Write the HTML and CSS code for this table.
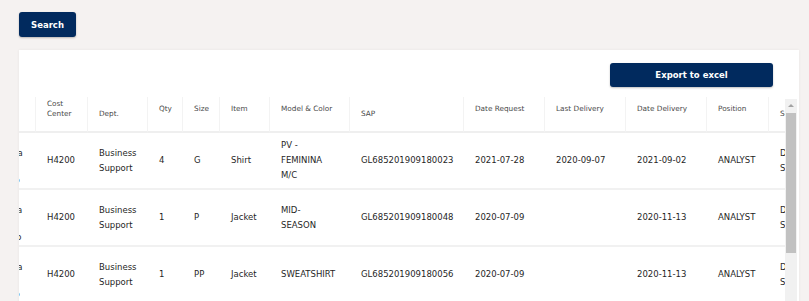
FILE: index.html
```html
<!DOCTYPE html>
<html lang="en">
  <head>
    <meta charset="UTF-8" />
    <meta name="viewport" content="width=device-width, initial-scale=1.0" />
    <title>Uniform requests</title>
    <link rel="stylesheet" href="styles.css">
  </head>
  <body>
    <div class="page">
      <button class="btn btn-search">Search</button>

      <div class="card">
        <div class="card-actions">
          <button class="btn btn-export">Export to excel</button>
        </div>

        <div class="grid-area">
          <div class="table-clip">
            <table class="requests">
              <thead>
                <tr>
                  <th class="c-name">Name</th>
                  <th class="c-cost">Cost Center</th>
                  <th class="c-dept th-mid">Dept.</th>
                  <th class="c-qty">Qty</th>
                  <th class="c-size">Size</th>
                  <th class="c-item">Item</th>
                  <th class="c-model">Model &amp; Color</th>
                  <th class="c-sap th-mid">SAP</th>
                  <th class="c-date">Date Request</th>
                  <th class="c-date">Last Delivery</th>
                  <th class="c-date">Date Delivery</th>
                  <th class="c-pos">Position</th>
                  <th class="c-sector th-mid">Sector</th>
                </tr>
              </thead>
              <tbody>
                <tr>
                  <td class="name">Ana<br>Oliveira<br>de<br>Ribeiro</td>
                  <td>H4200</td>
                  <td>Business Support</td>
                  <td>4</td>
                  <td>G</td>
                  <td>Shirt</td>
                  <td class="model">PV - FEMININA M/C</td>
                  <td>GL685201909180023</td>
                  <td>2021-07-28</td>
                  <td>2020-09-07</td>
                  <td>2021-09-02</td>
                  <td>ANALYST</td>
                  <td>Data<br>Science</td>
                </tr>
                <tr>
                  <td class="name">Ana<br>Moreira<br>de<br>Barreto</td>
                  <td>H4200</td>
                  <td>Business Support</td>
                  <td>1</td>
                  <td>P</td>
                  <td>Jacket</td>
                  <td class="model">MID- SEASON</td>
                  <td>GL685201909180048</td>
                  <td>2020-07-09</td>
                  <td></td>
                  <td>2020-11-13</td>
                  <td>ANALYST</td>
                  <td>Data<br>Science</td>
                </tr>
                <tr>
                  <td class="name">Lia<br>Teixeira<br>de<br>Ribeiro</td>
                  <td>H4200</td>
                  <td>Business Support</td>
                  <td>1</td>
                  <td>PP</td>
                  <td>Jacket</td>
                  <td class="model">SWEATSHIRT</td>
                  <td>GL685201909180056</td>
                  <td>2020-07-09</td>
                  <td></td>
                  <td>2020-11-13</td>
                  <td>ANALYST</td>
                  <td>Data<br>Science</td>
                </tr>
              </tbody>
            </table>
          </div>

          <div class="scrollbar">
            <div class="scroll-up"></div>
            <div class="scroll-thumb"></div>
          </div>
        </div>
      </div>
    </div>
  </body>
</html>
```

FILE: styles.css
```css
html,
body {
  margin: 0;
  height: 100%;
  overflow: hidden;
}

body {
  font-family: "DejaVu Sans", Arial, sans-serif;
  background-color: #f5f2f1;
  color: #1f1f1f;
}

.page {
  padding: 12px 10px 0 19px;
}

.btn {
  font-family: inherit;
  font-weight: bold;
  font-size: 8.5px;
  color: #fff;
  background-color: #012a5e;
  border: none;
  border-radius: 3px;
  box-shadow: 0 1px 2px rgba(0, 0, 0, 0.25);
  cursor: pointer;
  padding: 0;
}

.btn-search {
  width: 57px;
  height: 25px;
  display: block;
}

.card {
  margin-top: 13px;
  width: 780px;
  height: 260px;
  background-color: #fff;
  box-shadow: 0 0 3px rgba(0, 0, 0, 0.06);
}

.card-actions {
  display: flex;
  justify-content: flex-end;
  padding: 13px 26px 0 0;
}

.btn-export {
  width: 163px;
  height: 24px;
}

.grid-area {
  display: flex;
  margin-top: 10px;
}

.table-clip {
  flex: 1;
  overflow: hidden;
}

/* table is scrolled sideways, the name column is mostly out of view */
.requests {
  table-layout: fixed;
  width: 860px;
  margin-left: -40px;
  border-collapse: separate;
  border-spacing: 0;
}

.requests th,
.requests td {
  box-sizing: border-box;
  text-align: left;
  padding: 0 11px;
}

.requests th {
  height: 36px;
  font-size: 7.3px;
  line-height: 10px;
  font-weight: normal;
  color: #4a4a4a;
  vertical-align: middle;
  padding-bottom: 10px;
  border-right: 1px solid #f3f3f3;
  border-bottom: 2px solid #efefef;
}

.requests th.th-mid {
  padding-bottom: 0;
}

.requests td {
  height: 57px;
  font-size: 8.5px;
  line-height: 15px;
  vertical-align: middle;
  border-bottom: 2px solid #f1f1f1;
}

.requests td.name {
  line-height: 13.7px;
}

.requests td.model {
  padding-right: 14px;
}

.c-name { width: 57px; }
.c-cost { width: 52px; }
.c-dept { width: 60px; }
.c-qty { width: 35px; }
.c-size { width: 37px; }
.c-item { width: 50px; }
.c-model { width: 80px; }
.c-sap { width: 114px; }
.c-date { width: 81px; }
.c-pos { width: 62px; }
.c-sector { width: 70px; }

.scrollbar {
  width: 12px;
  margin: 2px 2px 0 0;
  background-color: #f1f1f1;
  display: flex;
  flex-direction: column;
  align-items: center;
}

.scroll-up {
  margin-top: 5px;
  width: 0;
  height: 0;
  border-left: 3px solid transparent;
  border-right: 3px solid transparent;
  border-bottom: 3px solid #a3a3a3;
}

.scroll-thumb {
  margin-top: 6px;
  width: 10px;
  height: 140px;
  background-color: #c1c1c1;
}
```
